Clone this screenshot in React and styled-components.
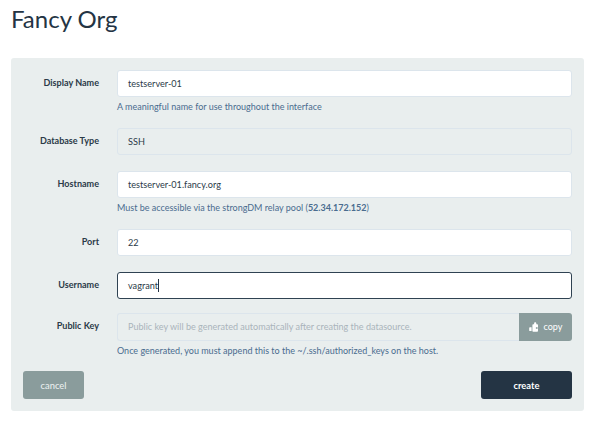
import React from "react";
import styled, { createGlobalStyle } from "styled-components";

const Global = createGlobalStyle`
  html, body { margin: 0; padding: 0; background: #fff; }
  body { font-family: Lato, "Liberation Sans", sans-serif; color: #243444; }
`;

const Page = styled.div`
  width: 600px;
  height: 426px;
  padding: 0 16px 0 11px;
  box-sizing: border-box;
  overflow: hidden;
`;

const Title = styled.h1`
  margin: 0;
  height: 58px;
  padding-top: 2px;
  box-sizing: border-box;
  font-size: 24px;
  line-height: 34px;
  font-weight: 400;
  color: #243444;
`;

const Panel = styled.form`
  background: #e9eeee;
  border-radius: 3px;
  height: 353px;
  padding: 12px;
  box-sizing: border-box;
`;

const Row = styled.div`
  display: grid;
  grid-template-columns: 76px 455px;
  column-gap: 18px;
  margin-bottom: ${(p) => p.$gap || 16}px;
`;

const Label = styled.label`
  font-size: 9.05px;
  font-weight: 700;
  line-height: 26px;
  text-align: right;
  white-space: nowrap;
  color: #2b3a48;
`;

const Field = styled.div`
  height: 27px;
  box-sizing: border-box;
  border: 1.5px solid ${(p) => (p.$focus ? "#2f4252" : "#dce5ec")};
  border-radius: 3px;
  background: ${(p) => (p.$off ? "#e9eeee" : "#fff")};
  padding: 0 10px;
  font-size: 9.15px;
  line-height: 25px;
  color: #2b3a48;
  white-space: nowrap;
`;

const Caret = styled.span`
  display: inline-block;
  width: 1px;
  height: 13px;
  background: #243444;
  vertical-align: -3px;
`;

const Hint = styled.div`
  grid-column: 2;
  height: 15px;
  font-size: 9px;
  line-height: 20px;
  color: #4a6c8f;
  white-space: nowrap;
  b { font-weight: 700; }
`;

const KeyBox = styled.div`
  display: flex;
  height: 28px;
`;

const KeyField = styled(Field)`
  flex: 1;
  height: 28px;
  border-right: 0;
  border-radius: 3px 0 0 3px;
  font-size: 9.05px;
  line-height: 26px;
  color: #a9b4bb;
`;

const CopyButton = styled.button`
  width: 53px;
  border: 0;
  padding: 0 0 1px;
  border-radius: 0 3px 3px 0;
  background: #8a9c9c;
  color: #fff;
  font: 400 9px Lato, sans-serif;
  display: flex;
  align-items: center;
  justify-content: center;
  gap: 5px;
`;

const Actions = styled.div`
  display: flex;
  justify-content: space-between;
`;

const Button = styled.button`
  height: 28px;
  width: ${(p) => (p.$primary ? 91 : 61)}px;
  border: 0;
  border-radius: 3px;
  background: ${(p) => (p.$primary ? "#243444" : "#8a9c9c")};
  color: ${(p) => (p.$primary ? "#fff" : "#eef2f2")};
  font: ${(p) => (p.$primary ? 700 : 400)} 9.4px Lato, sans-serif;
`;

const PasteIcon = () => (
  <svg width="10" height="10" viewBox="0 0 10 10" fill="#fff">
    <path d="M4.2 2.2h.9V1.4C5.1.8 5.6.3 6.2.3s1.1.5 1.1 1.1v.8h.9c.5 0 .8.3.8.8v5.9c0 .5-.3.8-.8.8H4.2c-.5 0-.8-.3-.8-.8V3c0-.5.3-.8.8-.8z" />
    <path d="M.9 5.2h1.7v3.9H.9c-.4 0-.7-.3-.7-.7V5.9c0-.4.3-.7.7-.7z" />
    <path d="M6.9 5.2h1.7v1.6H6.9z" fill="#8a9c9c" />
  </svg>
);

export default function App() {
  return (
    <Page>
      <Global />
      <Title>Fancy Org</Title>
      <Panel>
        <Row>
          <Label>Display Name</Label>
          <Field>testserver-01</Field>
          <Hint>A meaningful name for use throughout the interface</Hint>
        </Row>
        <Row>
          <Label>Database Type</Label>
          <Field $off>SSH</Field>
        </Row>
        <Row>
          <Label>Hostname</Label>
          <Field>testserver-01.fancy.org</Field>
          <Hint>Must be accessible via the strongDM relay pool (<b>52.34.172.152</b>)</Hint>
        </Row>
        <Row>
          <Label>Port</Label>
          <Field>22</Field>
        </Row>
        <Row $gap={14}>
          <Label>Username</Label>
          <Field $focus>vagrant<Caret /></Field>
        </Row>
        <Row $gap={15}>
          <Label>Public Key</Label>
          <KeyBox>
            <KeyField $off>Public key will be generated automatically after creating the datasource.</KeyField>
            <CopyButton type="button"><PasteIcon />copy</CopyButton>
          </KeyBox>
          <Hint>Once generated, you must append this to the ~/.ssh/authorized_keys on the host.</Hint>
        </Row>
        <Actions>
          <Button type="button">cancel</Button>
          <Button type="button" $primary>create</Button>
        </Actions>
      </Panel>
    </Page>
  );
}
